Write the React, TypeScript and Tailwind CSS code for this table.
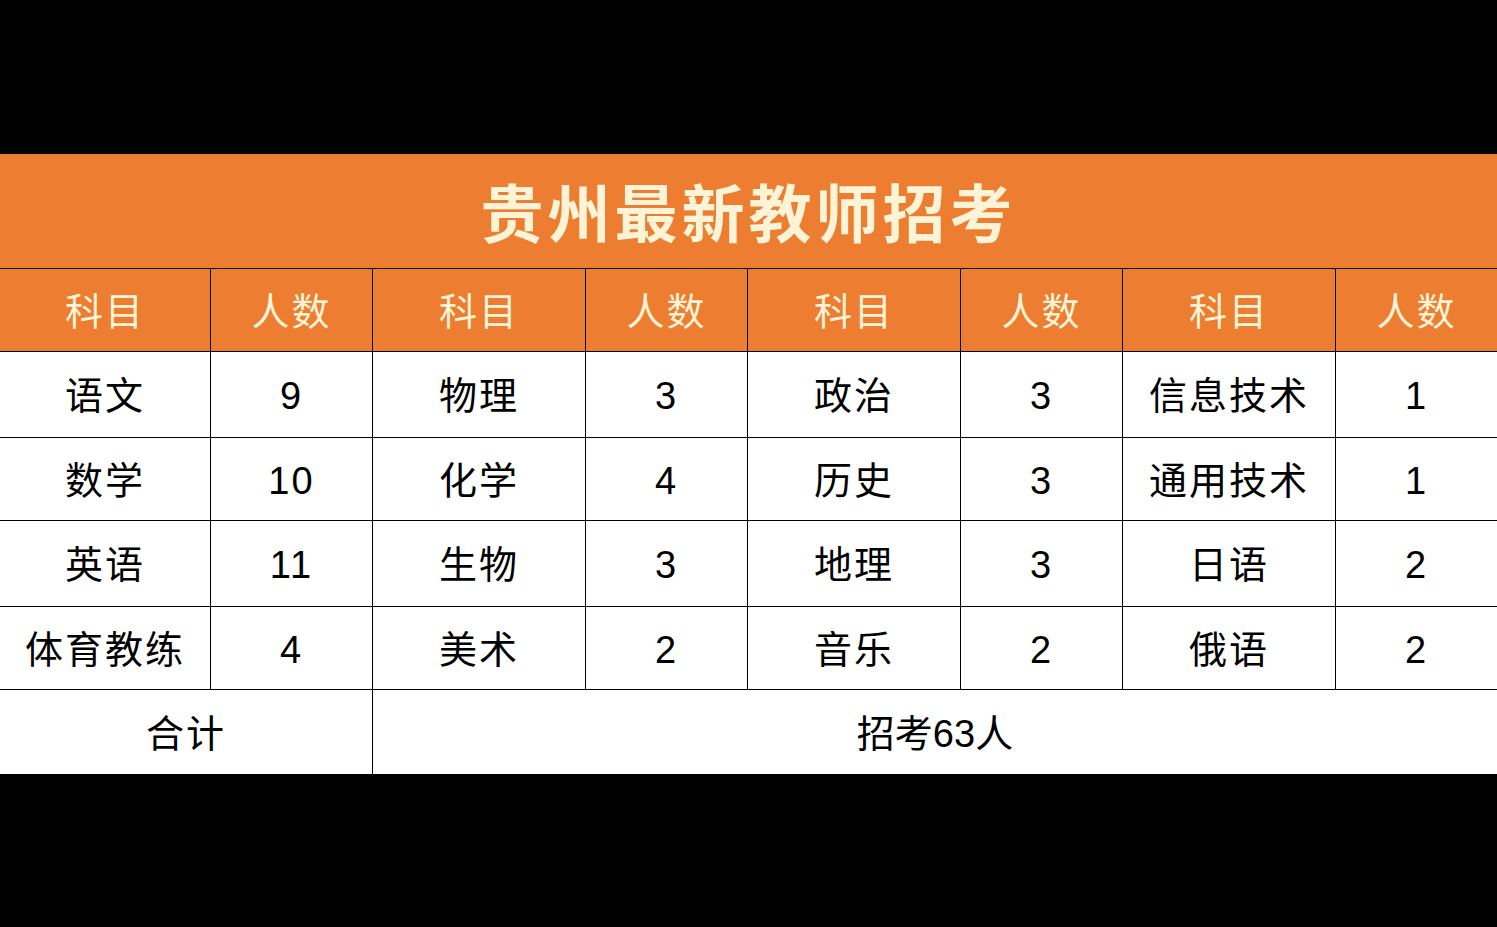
import React from "react";

const cols = "grid grid-cols-[211px_162px_213px_162px_213px_162px_213px_161px]";

const rows: [string, string, string, string, string, string, string, string][] = [
  ["语文", "9", "物理", "3", "政治", "3", "信息技术", "1"],
  ["数学", "10", "化学", "4", "历史", "3", "通用技术", "1"],
  ["英语", "11", "生物", "3", "地理", "3", "日语", "2"],
  ["体育教练", "4", "美术", "2", "音乐", "2", "俄语", "2"],
];
const heights = ["h-[86px]", "h-[83px]", "h-[86px]", "h-[83px]"];

export default function App() {
  return (
    <div className="w-[1497px] h-[927px] bg-black flex flex-col font-['Liberation_Sans','Noto_Sans_CJK_SC',sans-serif]">
      <div className="h-[154px]" />
      <div className="h-[115px] bg-[#ed7d31] border-b border-black flex items-center justify-center pt-[8px]">
        <span className="text-[63px] font-bold tracking-[4px] text-[#fdf3d6] leading-none">贵州最新教师招考</span>
      </div>
      <div className={`${cols} h-[83px] bg-[#ed7d31] border-b border-black`}>
        {["科目", "人数", "科目", "人数", "科目", "人数", "科目", "人数"].map((t, i) => (
          <div
            key={i}
            className={`flex items-center justify-center pt-[4px] text-[38px] tracking-[2px] text-[#fdf3d6] ${i < 7 ? "border-r border-black" : ""}`}
          >
            {t}
          </div>
        ))}
      </div>
      {rows.map((r, ri) => (
        <div key={ri} className={`${cols} ${heights[ri]} bg-white border-b border-black`}>
          {r.map((t, i) => (
            <div
              key={i}
              className={`flex items-center justify-center pt-[4px] text-[38px] tracking-[2px] text-black ${i < 7 ? "border-r border-black" : ""}`}
            >
              {t}
            </div>
          ))}
        </div>
      ))}
      <div className="grid grid-cols-[373px_1124px] h-[84px] bg-white">
        <div className="flex items-center justify-center pt-[4px] text-[38px] tracking-[2px] text-black border-r border-black">合计</div>
        <div className="flex items-center justify-center pt-[4px] text-[38px] text-black">招考63人</div>
      </div>
    </div>
  );
}
